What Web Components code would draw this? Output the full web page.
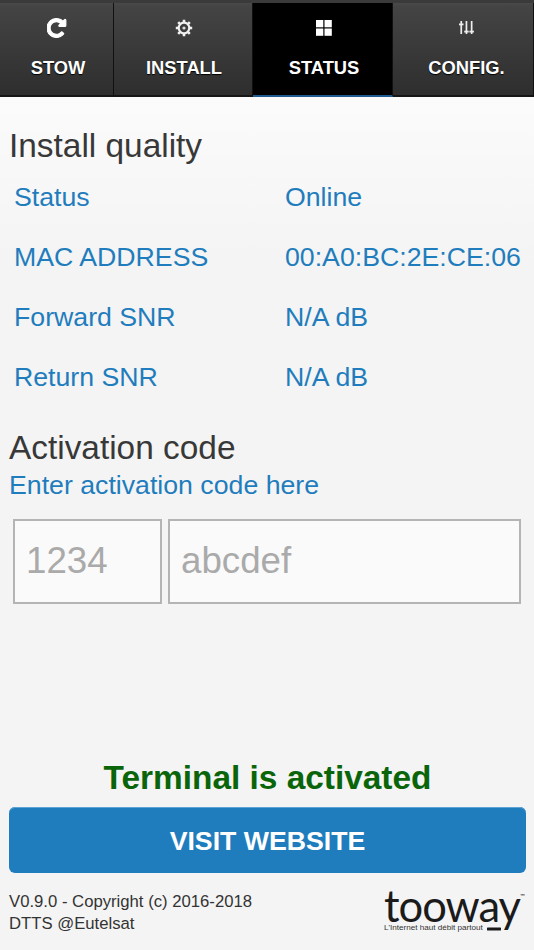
<!DOCTYPE html>
<html lang="en"><head><meta charset="utf-8"><title>Status</title>
<style>
html,body{margin:0;padding:0;height:100%;background:#f4f4f4}
body{font-family:"Liberation Sans",Arial,sans-serif}
</style></head><body>
<status-app>
  <tab-bar slot="nav">
    <nav-tab label="STOW" icon="stow" style="--w:114px"></nav-tab>
    <nav-tab label="INSTALL" icon="gear" style="--w:139px;--pad:2px"></nav-tab>
    <nav-tab label="STATUS" icon="grid" active style="--w:140px"></nav-tab>
    <nav-tab label="CONFIG." icon="sliders" style="--w:141px;--pad:7px"></nav-tab>
  </tab-bar>
  <section-title>Install quality</section-title>
  <info-row name="Status" value="Online"></info-row>
  <info-row name="MAC ADDRESS" value="00:A0:BC:2E:CE:06"></info-row>
  <info-row name="Forward SNR" value="N/A dB"></info-row>
  <info-row name="Return SNR" value="N/A dB"></info-row>
  <activation-form></activation-form>
  <state-message slot="bottom">Terminal is activated</state-message>
  <visit-button slot="bottom">VISIT WEBSITE</visit-button>
  <app-footer slot="bottom"></app-footer>
</status-app>
<script>
function comp(name, html){
  customElements.define(name, class extends HTMLElement{
    connectedCallback(){
      if(this.shadowRoot) return;
      const r=this.attachShadow({mode:'open'});
      r.innerHTML=typeof html==='function'?html(this):html;
    }
  });
}
const ICONS={
 stow:`<svg width="22" height="22" viewBox="0 0 1792 1792"><path fill="#fff" stroke="#fff" stroke-width="90" stroke-linejoin="round" d="M1536 256v448q0 26-19 45t-45 19h-448q-42 0-59-40-17-39 14-69l138-138q-148-137-349-137-104 0-198.500 40.500t-163.500 109.500-109.500 163.500-40.500 198.500 40.500 198.500 109.500 163.500 163.500 109.500 198.500 40.500q119 0 225-52t179-147q7-10 23-12 15 0 25 9l137 138q9 8 9.500 20.500t-7.500 22.500q-109 132-264 204.500t-327 72.500q-156 0-298-61t-245-164-164-245-61-298 61-298 164-245 245-164 298-61q147 0 284.500 55.500t244.500 156.500l130-129q29-31 70-14 39 17 39 59z"/></svg>`,
 gear:`<svg width="18" height="18" viewBox="0 0 18 18"><g fill="none" stroke="#f2f2f2"><circle cx="9" cy="9" r="5.300" stroke-width="2.200"/><circle cx="9" cy="9" r="1.600" fill="#ddd" stroke="none"/><path stroke-width="2.600" d="M9 .8v2.400M9 14.800v2.400M.8 9h2.400M14.800 9h2.400M3.200 3.200l1.700 1.700M13.100 13.100l1.700 1.700M3.200 14.800l1.700-1.700M13.100 4.900l1.700-1.700"/></g></svg>`,
 grid:`<svg width="16" height="16" viewBox="0 0 16 16" fill="#fff"><rect width="7.300" height="7.300"/><rect x="8.500" width="7.300" height="7.300"/><rect y="8.500" width="7.300" height="7.300"/><rect x="8.500" y="8.500" width="7.300" height="7.300"/></svg>`,
 sliders:`<svg width="15" height="14" viewBox="0 0 15 14" fill="#eee"><rect x="1.400" y="0" width="1.700" height="13"/><rect x="0" y="2.500" width="4.500" height="1.800"/><rect x="6.600" y="0" width="1.700" height="13"/><rect x="5.200" y="9.700" width="4.500" height="1.800"/><rect x="11.800" y="0" width="1.700" height="13"/><rect x="10.400" y="9.700" width="4.500" height="1.800"/></svg>`
};
comp('status-app',`<style>
:host{display:flex;flex-direction:column;height:950px;width:534px;overflow:hidden;background:linear-gradient(#fbfbfb 97px,#f4f4f4 260px)}
main{padding:31px 9px 0;display:flex;flex-direction:column;flex:1 1 auto}
.bottom{padding:0 8px 0 9px;display:flex;flex-direction:column}
</style><slot name="nav"></slot><main><slot></slot></main><div class="bottom"><slot name="bottom"></slot></div>`);
comp('tab-bar',`<style>
:host{display:flex;height:97px;flex:none;background:#111;box-sizing:border-box;border-top:3px solid #3a3a3a}
</style><slot></slot>`);
comp('nav-tab',h=>`<style>
:host{display:flex;flex-direction:column;align-items:center;flex:none;width:var(--w);box-sizing:border-box;height:94px;padding-left:var(--pad,3px);
 background:${h.hasAttribute('active')?'#000':'linear-gradient(#4a4a4a 0,#444 3px,#2e2e2e)'};
 border-bottom:${h.hasAttribute('active')?'2px solid #1c5c90':'2px solid #151515'};
 border-right:1px solid #111;
 color:#fff;font:bold 18.350px/22px "Liberation Sans",Arial,sans-serif;text-shadow:0 1px 1px #000}
.i{height:24px;margin-top:13px;display:flex;align-items:center;justify-content:center}
.l{margin-top:17px}
</style><div class="i">${ICONS[h.getAttribute('icon')]}</div><div class="l">${h.getAttribute('label')}</div>`);
comp('section-title',`<style>:host{display:block;color:#383838;font-size:33.400px;line-height:36px;margin-bottom:3px}</style><slot></slot>`);
comp('info-row',h=>`<style>
:host{display:grid;grid-template-columns:271px 1fr;height:60px;align-items:center;padding-left:5px;color:#1f7dbd;font-size:26.700px;white-space:nowrap}
</style><div>${h.getAttribute('name')}</div><div>${h.getAttribute('value')}</div>`);
comp('activation-form',`<style>
:host{display:block;margin-top:23px}
h2{margin:0;font:400 33.400px/36px "Liberation Sans",Arial,sans-serif;color:#383838}
p{margin:3px 0 0;font-size:26.700px;line-height:32px;color:#1f7dbd}
.f{display:flex;gap:6px;margin:18px 4px 0 4px}
.b{box-sizing:border-box;height:85px;border:2px solid #b4b4b4;background:#fafafa;color:#aaa;font-size:36.700px;display:flex;align-items:center;padding:0 0 2px 11px}
.a{width:149px}.c{flex:1}
</style><h2>Activation code</h2><p>Enter activation code here</p>
<div class="f"><div class="b a">1234</div><div class="b c">abcdef</div></div>`);
comp('state-message',`<style>:host{display:block;text-align:center;color:#0a650a;font-size:33.400px;font-weight:700;line-height:36px;margin-bottom:11px}</style><slot></slot>`);
comp('visit-button',`<style>:host{display:flex;align-items:center;justify-content:center;box-sizing:border-box;padding-top:2px;height:66px;border-radius:6px;background:#1f7dbd;box-shadow:inset 0 1px 0 #5aa3d4;color:#fff;font-size:26.700px;font-weight:700}</style><slot></slot>`);
comp('app-footer',`<style>
:host{display:flex;justify-content:space-between;height:77px;color:#333;font-size:16.700px;line-height:22px}
.t{padding-top:18px}
.logo{width:137px;margin:13px 5px 0 0;position:relative;color:#1b1b1b;height:46px}
.w{font:400 43.500px/38px "Lato","Noto Sans",sans-serif;letter-spacing:-1px;white-space:nowrap}
.w span{font-size:6px;letter-spacing:0;vertical-align:24px;line-height:0}
.s{font-size:8.100px;line-height:10px;color:#333;white-space:nowrap;position:absolute;left:0;top:37px}
svg{position:absolute;left:103px;top:40px}
</style><div class="t">V0.9.0 - Copyright (c) 2016-2018<br>DTTS @Eutelsat</div>
<div class="logo"><div class="w">tooway<span>™</span></div><div class="s">L'Internet haut débit partout</div>
<svg width="14" height="5" viewBox="0 0 14 5"><path d="M1 3H13" fill="none" stroke="#1b1b1b" stroke-width="3" stroke-linecap="round"/></svg></div>`);
</script>
</body></html>
